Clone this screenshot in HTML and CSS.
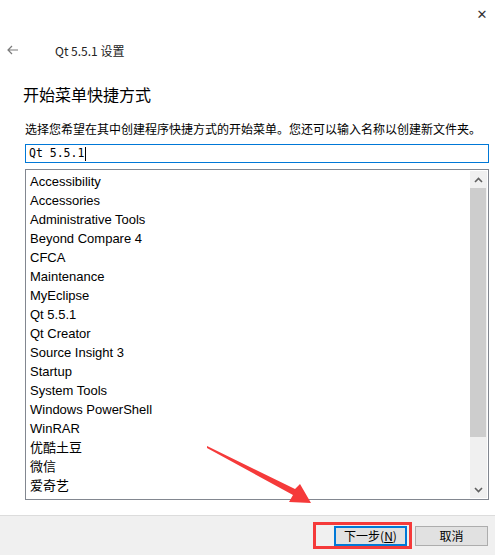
FILE: index.html
```html
<!DOCTYPE html>
<html lang="zh-CN">
<head>
  <meta charset="UTF-8" />
  <title>Qt 5.5.1 设置</title>
  <link rel="stylesheet" href="styles.css">
</head>
<body>
  <div class="wizard">
    <div class="topbar">
      <span class="close">&#x2715;</span>
    </div>
    <div class="titlebar">
      <svg class="back" width="12" height="10" viewBox="0 0 12 10">
        <path d="M5 1 L1 5 L5 9 M1 5 H11" fill="none" stroke="#7a7a7a" stroke-width="1.2"/>
      </svg>
      <span class="title">Qt 5.5.1 设置</span>
    </div>

    <div class="content">
      <h2>开始菜单快捷方式</h2>
      <p class="desc">选择您希望在其中创建程序快捷方式的开始菜单。您还可以输入名称以创建新文件夹。</p>
      <div class="field">Qt 5.5.1<span class="caret"></span></div>

      <div class="listbox">
        <ul class="items">
          <li>Accessibility</li>
          <li>Accessories</li>
          <li>Administrative Tools</li>
          <li>Beyond Compare 4</li>
          <li>CFCA</li>
          <li>Maintenance</li>
          <li>MyEclipse</li>
          <li>Qt 5.5.1</li>
          <li>Qt Creator</li>
          <li>Source Insight 3</li>
          <li>Startup</li>
          <li>System Tools</li>
          <li>Windows PowerShell</li>
          <li>WinRAR</li>
          <li>优酷土豆</li>
          <li>微信</li>
          <li>爱奇艺</li>
        </ul>
        <div class="scrollbar">
          <div class="sb-btn">
            <svg width="9" height="6" viewBox="0 0 9 6"><path d="M1 5 L4.5 1.5 L8 5" fill="none" stroke="#606060" stroke-width="1.6"/></svg>
          </div>
          <div class="sb-track"><div class="sb-thumb"></div></div>
          <div class="sb-btn">
            <svg width="9" height="6" viewBox="0 0 9 6"><path d="M1 1 L4.5 4.5 L8 1" fill="none" stroke="#606060" stroke-width="1.6"/></svg>
          </div>
        </div>
      </div>
    </div>

    <div class="footer">
      <div class="highlight">
        <button class="btn btn-default">下一步(<u>N</u>)</button>
      </div>
      <button class="btn">取消</button>
    </div>

    <svg class="pointer" width="495" height="555" viewBox="0 0 495 555">
      <polygon points="207,446 295,489 300,484 311,503 289,502 293,495 207,448" fill="#f53a3a"/>
    </svg>
  </div>
</body>
</html>
```

FILE: styles.css
```css
* {
  box-sizing: border-box;
  margin: 0;
  padding: 0;
}

body {
  width: 495px;
  height: 555px;
  background: #fff;
  color: #000;
  font-family: "Noto Sans CJK SC", "Liberation Sans", sans-serif;
  overflow: hidden;
}

.wizard {
  position: relative;
  height: 555px;
  display: flex;
  flex-direction: column;
}

.topbar {
  height: 28px;
  display: flex;
  justify-content: flex-end;
  align-items: center;
  padding-right: 5px;
}

.close {
  font-family: "DejaVu Sans", sans-serif;
  font-size: 13px;
  color: #333;
  width: 16px;
  text-align: center;
}

.titlebar {
  height: 44px;
  display: flex;
  align-items: center;
  padding-left: 7px;
}

.back {
  margin-right: 36px;
}

.title {
  font-size: 12px;
  color: #222;
}

.content {
  flex: 1;
  padding: 12px 6px 0 23px;
}

h2 {
  font-size: 16px;
  font-weight: normal;
  line-height: 20px;
  margin-bottom: 17px;
}

.desc {
  font-size: 12px;
  line-height: 16px;
  padding-left: 2px;
  margin-bottom: 7px;
}

.field {
  margin-left: 2px;
  height: 19px;
  border: 1px solid #0078d7;
  font-family: "DejaVu Sans Mono", "Liberation Mono", monospace;
  font-size: 11.5px;
  line-height: 17px;
  padding-left: 3px;
  display: flex;
  align-items: center;
}

.caret {
  display: inline-block;
  width: 1px;
  height: 14px;
  background: #000;
  margin-left: 1px;
}

.listbox {
  margin: 6px 0 0 2px;
  height: 331px;
  border: 1px solid #828790;
  display: flex;
}

.items {
  list-style: none;
  flex: 1;
  padding: 2px 0 0 4px;
  font-family: "Liberation Sans", "Noto Sans CJK SC", sans-serif;
  font-size: 13px;
}

.items li {
  height: 19px;
  line-height: 19px;
}

.scrollbar {
  width: 17px;
  margin: 1px 1px 1px 0;
  background: #f0f0f0;
  display: flex;
  flex-direction: column;
}

.sb-btn {
  height: 17px;
  display: flex;
  align-items: center;
  justify-content: center;
}

.sb-track {
  flex: 1;
}

.sb-thumb {
  height: 249px;
  background: #cdcdcd;
  margin: 0 1px 0 0;
}

.footer {
  height: 40px;
  background: #f0f0f0;
  border-top: 1px solid #dcdcdc;
  display: flex;
  align-items: center;
  justify-content: flex-end;
  padding-right: 7px;
  gap: 3px;
}

.highlight {
  border: 3px solid #f53a3a;
  height: 27px;
  width: 99px;
  display: flex;
  align-items: center;
  justify-content: flex-end;
  padding-right: 2px;
}

.btn {
  width: 73px;
  height: 20px;
  background: #e1e1e1;
  border: 1px solid #adadad;
  font-family: "Noto Sans CJK SC", sans-serif;
  font-size: 12px;
  line-height: 16px;
  color: #000;
}

.btn-default {
  border: 2px solid #0078d7;
}

.btn u {
  text-decoration: underline;
}

.pointer {
  position: absolute;
  left: 0;
  top: 0;
  pointer-events: none;
}
```
